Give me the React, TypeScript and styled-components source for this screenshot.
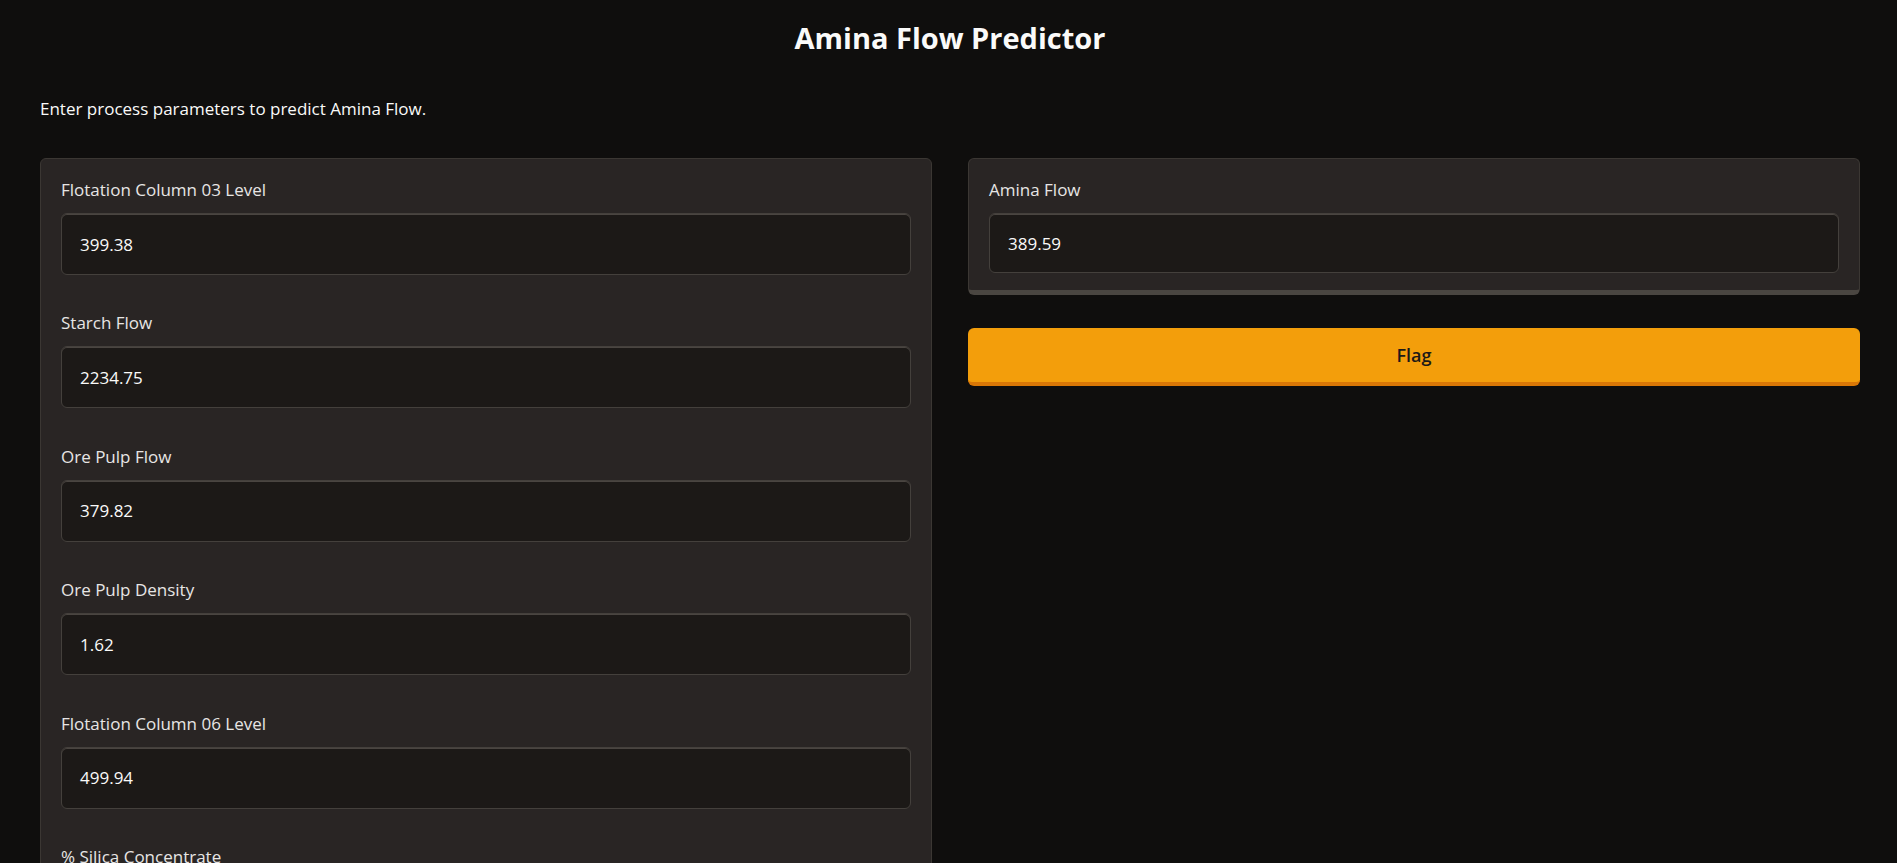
import React from "react";
import styled, { createGlobalStyle } from "styled-components";

const GlobalStyle = createGlobalStyle`
  html, body {
    margin: 0;
    padding: 0;
    background: #0f0e0d;
  }
  body {
    font-family: "Open Sans", "Noto Sans", sans-serif;
    color: #e7e5e4;
  }
  * { box-sizing: border-box; }
`;

const Page = styled.div`
  padding: 0 37px 40px 40px;
  display: flex;
  flex-direction: column;
`;

const Title = styled.h1`
  margin: 0;
  padding-top: 18px;
  font-size: 29px;
  line-height: 39px;
  font-weight: 700;
  text-align: center;
  color: #fafaf9;
`;

const Description = styled.p`
  margin: 0;
  padding-top: 40px;
  font-size: 17px;
  line-height: 24px;
  color: #fafaf9;
`;

const Row = styled.div`
  margin-top: 37px;
  display: grid;
  grid-template-columns: 1fr 1fr;
  column-gap: 36px;
  align-items: start;
`;

const Panel = styled.div<{ $raised?: boolean }>`
  background: #292524;
  border: 1px solid #3b3733;
  border-bottom: ${(p) => (p.$raised ? "5px solid #4a4641" : "1px solid #3b3733")};
  border-radius: 6px;
  padding: 21px 20px ${(p) => (p.$raised ? "17px" : "20px")};
  display: flex;
  flex-direction: column;
  gap: 38.4px;
`;

const Field = styled.label`
  display: flex;
  flex-direction: column;
  gap: 13px;
`;

const FieldLabel = styled.span`
  font-size: 17px;
  line-height: 20px;
  color: #e7e5e4;
`;

const ValueBox = styled.div<{ $h: number }>`
  height: ${(p) => p.$h}px;
  display: flex;
  align-items: center;
  padding: 0 18px;
  background: #1c1917;
  border: 1px solid #44403c;
  box-shadow: inset 0 1px 0 #4a4541;
  border-radius: 6px;
  font-size: 17px;
  color: #fafaf9;
`;

const RightColumn = styled.div`
  display: flex;
  flex-direction: column;
  gap: 33px;
`;

const FlagButton = styled.button`
  height: 58px;
  width: 100%;
  border: none;
  border-bottom: 4px solid #d97706;
  border-radius: 6px;
  background: #f39e0b;
  color: #1c1917;
  font-family: inherit;
  font-size: 18px;
  font-weight: 600;
  cursor: pointer;
  padding: 0;
`;

const inputs: { label: string; value: string }[] = [
  { label: "Flotation Column 03 Level", value: "399.38" },
  { label: "Starch Flow", value: "2234.75" },
  { label: "Ore Pulp Flow", value: "379.82" },
  { label: "Ore Pulp Density", value: "1.62" },
  { label: "Flotation Column 06 Level", value: "499.94" },
  { label: "% Silica Concentrate", value: "2.33" },
];

export default function App() {
  return (
    <>
      <GlobalStyle />
      <Page>
        <Title>Amina Flow Predictor</Title>
        <Description>Enter process parameters to predict Amina Flow.</Description>
        <Row>
          <Panel>
            {inputs.map((f) => (
              <Field key={f.label}>
                <FieldLabel>{f.label}</FieldLabel>
                <ValueBox $h={62}>{f.value}</ValueBox>
              </Field>
            ))}
          </Panel>
          <RightColumn>
            <Panel $raised>
              <Field>
                <FieldLabel>Amina Flow</FieldLabel>
                <ValueBox $h={60}>389.59</ValueBox>
              </Field>
            </Panel>
            <FlagButton>Flag</FlagButton>
          </RightColumn>
        </Row>
      </Page>
    </>
  );
}
